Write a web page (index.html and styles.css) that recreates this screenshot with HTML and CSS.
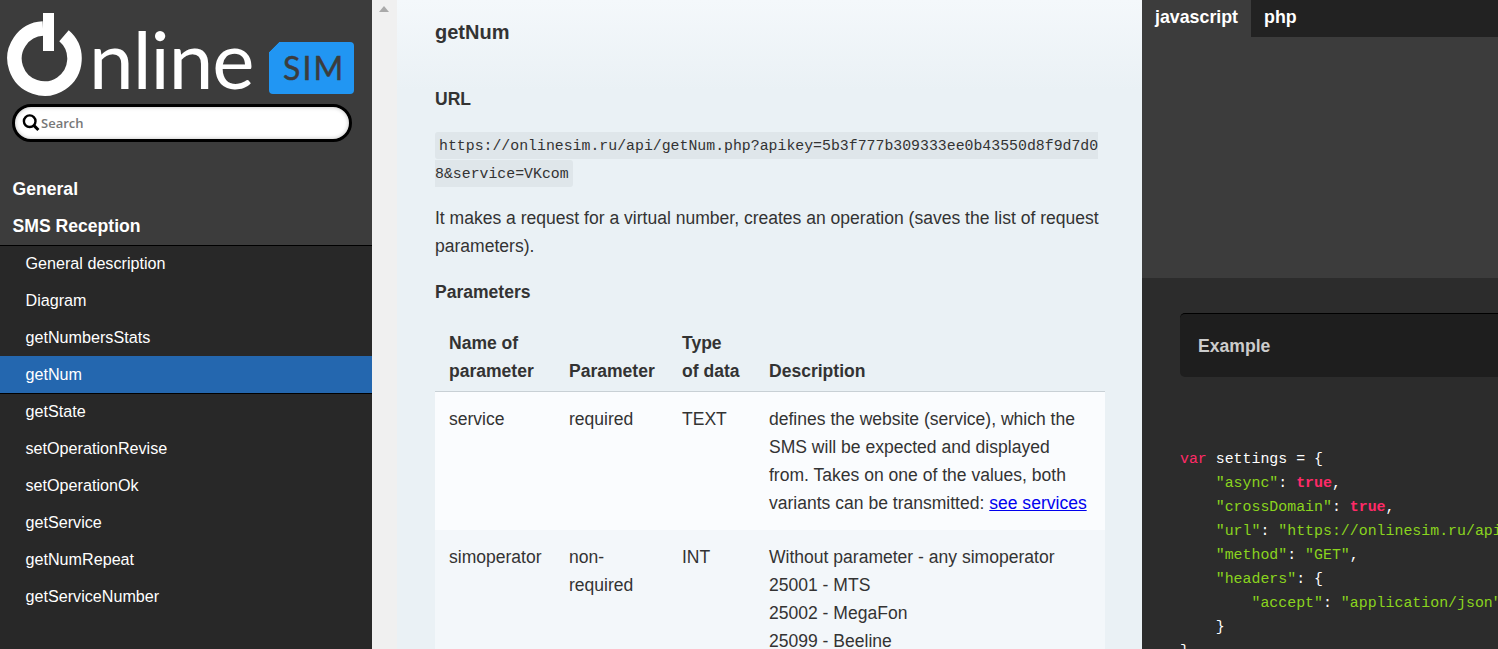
FILE: index.html
```html
<!DOCTYPE html>
<html lang="en">
<head>
  <meta charset="UTF-8">
  <title>OnlineSim API</title>
  <link rel="stylesheet" href="styles.css">
</head>
<body>
  <div class="sidebar">
    <div class="logo">
      <svg class="logo-power" width="76" height="84" viewBox="0 0 76 84">
        <path d="M36 15.54 A30 30 0 1 0 57 22.7" fill="none" stroke="#fff" stroke-width="14.5"/>
        <rect x="36" y="0" width="11" height="38" fill="#fff"/>
      </svg>
      <span class="logo-text">nline</span>
      <span class="logo-badge">SIM</span>
    </div>
    <div class="search">
      <svg class="search-icon" width="18" height="18" viewBox="0 0 18 18">
        <circle cx="7.7" cy="7.2" r="5.8" fill="none" stroke="#000" stroke-width="2.4"/>
        <path d="M11.8 11.4 L16.4 16" stroke="#000" stroke-width="3"/>
      </svg>
      <input class="search-input" type="text" placeholder="Search">
    </div>
    <ul class="nav-top">
      <li>General</li>
      <li>SMS Reception</li>
    </ul>
    <ul class="nav-sub">
      <li>General description</li>
      <li>Diagram</li>
      <li>getNumbersStats</li>
      <li class="active">getNum</li>
      <li>getState</li>
      <li>setOperationRevise</li>
      <li>setOperationOk</li>
      <li>getService</li>
      <li>getNumRepeat</li>
      <li>getServiceNumber</li>
    </ul>
  </div>

  <div class="gutter"><span class="gutter-arrow"></span></div>

  <div class="content">
    <h1>getNum</h1>
    <h2>URL</h2>
    <p class="url"><code>https://onlinesim.ru/api/getNum.php?apikey=5b3f777b309333ee0b43550d8f9d7d08&amp;service=VKcom</code></p>
    <p>It makes a request for a virtual number, creates an operation (saves the list of request parameters).</p>
    <h3>Parameters</h3>
    <table>
      <colgroup>
        <col class="col-name">
        <col class="col-param">
        <col class="col-type">
        <col class="col-desc">
      </colgroup>
      <thead>
        <tr>
          <th>Name of parameter</th>
          <th>Parameter</th>
          <th>Type<br>of data</th>
          <th>Description</th>
        </tr>
      </thead>
      <tbody>
        <tr>
          <td>service</td>
          <td>required</td>
          <td>TEXT</td>
          <td>defines the website (service), which the SMS will be expected and displayed from. Takes on one of the values, both variants can be transmitted: <a href="#">see services</a></td>
        </tr>
        <tr>
          <td>simoperator</td>
          <td>non-required</td>
          <td>INT</td>
          <td>Without parameter - any simoperator<br>25001 - MTS<br>25002 - MegaFon<br>25099 - Beeline</td>
        </tr>
      </tbody>
    </table>
  </div>

  <div class="code-panel">
    <div class="tabs">
      <span class="tab active">javascript</span>
      <span class="tab">php</span>
    </div>
    <div class="tab-blank"></div>
    <div class="example">
      <div class="example-title">Example</div>
      <div class="code">
        <div class="line"><span class="kw">var</span> settings = {</div>
        <div class="line i1"><span class="str">"async"</span>: <span class="bool">true</span>,</div>
        <div class="line i1"><span class="str">"crossDomain"</span>: <span class="bool">true</span>,</div>
        <div class="line i1"><span class="str">"url"</span>: <span class="str">"https://onlinesim.ru/api/getNum.php"</span>,</div>
        <div class="line i1"><span class="str">"method"</span>: <span class="str">"GET"</span>,</div>
        <div class="line i1"><span class="str">"headers"</span>: {</div>
        <div class="line i2"><span class="str">"accept"</span>: <span class="str">"application/json"</span></div>
        <div class="line i1">}</div>
        <div class="line">}</div>
      </div>
    </div>
  </div>
</body>
</html>
```

FILE: styles.css
```css
* {
  box-sizing: border-box;
}
html, body {
  height: 100%;
}
body {
  margin: 0;
  display: flex;
  height: 649px;
  overflow: hidden;
  font-family: "Liberation Sans", Arial, sans-serif;
  font-size: 16px;
  color: #333;
  background: #eaf1f5;
}

/* left menu */
.sidebar {
  width: 372px;
  flex: none;
  background: #3c3c3c;
  color: #fff;
  display: flex;
  flex-direction: column;
}
.logo {
  height: 104px;
  padding: 13px 0 0 7px;
  display: flex;
  align-items: flex-start;
}
.logo-power {
  flex: none;
}
.logo-text {
  font-family: Lato, sans-serif;
  font-weight: 400;
  font-size: 80px;
  letter-spacing: -1px;
  line-height: 84px;
  margin-left: 6px;
  margin-top: 3px;
  color: #fff;
}
.logo-badge {
  width: 85px;
  height: 52px;
  margin: 29px 0 0 15px;
  padding-left: 6px;
  background: linear-gradient(135deg, transparent 7px, #2196f3 7.5px);
  color: #3c3c3c;
  border-radius: 4px;
  font-family: Lato, sans-serif;
  font-size: 32px;
  font-weight: 400;
  letter-spacing: 2px;
  -webkit-text-stroke: 0.5px #3c3c3c;
  text-align: center;
  line-height: 52px;
}
.search {
  margin: 0 20px 0 12px;
  height: 38px;
  border: 3px solid #000;
  border-radius: 19px;
  background: #fff;
  box-shadow: inset 0 0 4px #bbb;
  display: flex;
  align-items: center;
  padding-left: 7px;
}
.search-icon {
  flex: none;
}
.search-input {
  flex: 1;
  min-width: 0;
  border: none;
  outline: none;
  background: transparent;
  padding: 0 0 0 1px;
  font-family: "Open Sans", sans-serif;
  font-size: 13px;
  font-weight: 600;
}
.search-input::placeholder {
  color: #777;
  opacity: 1;
}
.nav-top, .nav-sub {
  list-style: none;
  margin: 0;
  padding: 0;
}
.nav-top {
  margin-top: 29px;
  font-size: 17.6px;
  font-weight: bold;
}
.nav-top li {
  height: 37px;
  line-height: 36px;
  padding-left: 12.5px;
}
.nav-sub {
  flex: 1;
  background: #282828;
  box-shadow: inset 0 1px 0 #000;
  font-size: 16.15px;
}
.nav-sub li {
  height: 37px;
  line-height: 37px;
  padding-left: 25.5px;
  color: #fff;
}
.nav-sub li.active {
  background: #2467af;
  box-shadow: 0 1px 0 #000;
}

/* strip between the menu and the page */
.gutter {
  width: 25px;
  flex: none;
  background: #f0f0f0;
  position: relative;
}
.gutter-arrow {
  position: absolute;
  left: 7px;
  top: 6px;
  border-left: 5.5px solid transparent;
  border-right: 5.5px solid transparent;
  border-bottom: 6px solid #a9a9a9;
}

/* main column */
.content {
  width: 745px;
  flex: none;
  padding: 18px 37px 0 38px;
  background: linear-gradient(#f4f8fb, #eaf1f5 90px);
  font-size: 17.55px;
  line-height: 28px;
  color: #333;
}
h1, h2, h3 {
  font-size: 17.55px;
  line-height: 28px;
  margin: 0;
}
h1 {
  margin-bottom: 39px;
  font-size: 20px;
}
h2 {
  margin-bottom: 18px;
}
h3 {
  margin-bottom: 23px;
}
.content p {
  margin: 0 0 18px;
}
.content p.url {
  margin-bottom: 17px;
  font-family: "Liberation Mono", monospace;
  font-size: 14.85px;
}
code {
  font-family: inherit;
  font-size: inherit;
  background: #dfe6ea;
  padding: 5.5px 4px;
  border-radius: 3px;
  word-break: break-all;
}
table {
  width: 670px;
  table-layout: fixed;
  border-collapse: collapse;
}
.col-name { width: 120px; }
.col-param { width: 113px; }
.col-type { width: 87px; }
.col-desc { width: 350px; }
th {
  text-align: left;
  vertical-align: bottom;
  padding: 0 14px 6px;
  border-bottom: 1px solid #c8d0d5;
}
td {
  vertical-align: top;
  padding: 13px 14px;
}
tbody tr:nth-child(odd) {
  background: #fafcfe;
}
tbody tr:nth-child(even) {
  background: #f3f7fa;
}
a {
  color: #0000ee;
}

/* code column */
.code-panel {
  flex: 1;
  min-width: 0;
  background: #2c2c2c;
  color: #fff;
  overflow: hidden;
}
.tabs {
  height: 37px;
  background: #222;
  display: flex;
}
.tab {
  padding: 0 13px;
  line-height: 34px;
  font-weight: bold;
  font-size: 17.8px;
}
.tab.active {
  background: #3c3c3c;
}
.tab-blank {
  height: 241px;
  background: #3c3c3c;
}
.example {
  padding: 35px 0 0 38px;
}
.example-title {
  height: 64px;
  padding-left: 18px;
  line-height: 64px;
  font-size: 17.6px;
  font-weight: bold;
  color: #ccc;
  background: #1e1e1e;
  border-top: 1px solid #000;
  border-radius: 5px 0 0 5px;
}
.code {
  margin: 70px 0 0;
  font-family: "Liberation Mono", monospace;
  font-size: 14.9px;
  line-height: 24px;
  color: #fff;
}
.line {
  white-space: nowrap;
}
.i1 {
  padding-left: 4ch;
}
.i2 {
  padding-left: 8ch;
}
.kw, .bool {
  color: #ff2a68;
}
.bool {
  font-weight: bold;
}
.str {
  color: #8ad41e;
}
```
